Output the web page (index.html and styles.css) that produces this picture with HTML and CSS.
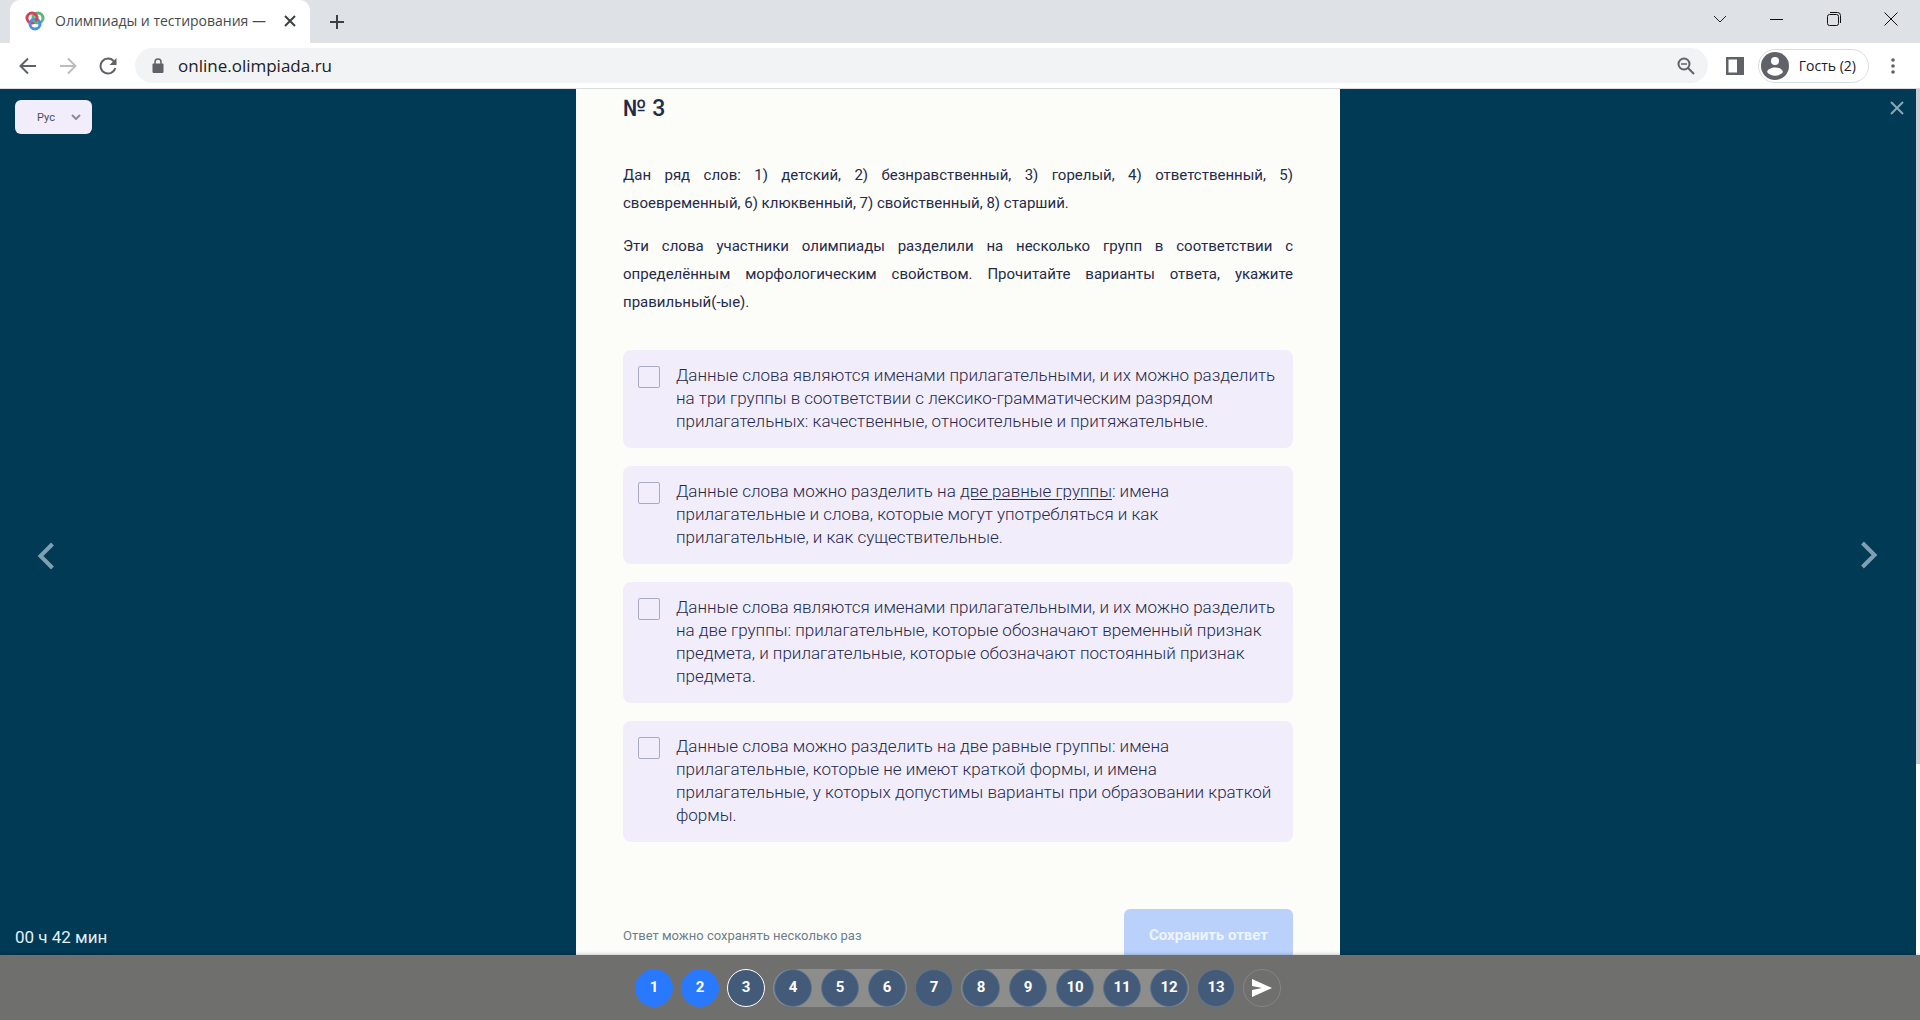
FILE: index.html
```html
<!DOCTYPE html>
<html lang="ru">
<head>
    <meta charset="UTF-8">
    <meta name="viewport" content="width=device-width, initial-scale=1.0">
    <title>Олимпиады и тестирования</title>
    <link rel="stylesheet" href="styles.css">
</head>
<body>
    <div class="browser">
        <div class="tabs">
            <div class="tab">
                <svg class="favicon" width="20" height="20" viewBox="0 0 20 20" fill="none" stroke-width="3">
                    <circle cx="13" cy="7" r="5" stroke="#58b878"/>
                    <circle cx="10" cy="13" r="5" stroke="#4a8fe8"/>
                    <circle cx="7" cy="7" r="5" stroke="#cf4456"/>
                    <path d="M8 6a5 5 0 0 0 4 6" stroke="#58b878" stroke-width="2"/>
                    <path d="M5 13a5 5 0 0 1 5-5" stroke="#4a8fe8" stroke-width="2"/>
                </svg>
                <span class="tab-title">Олимпиады и тестирования —</span>
                <button class="tab-close" aria-label="Закрыть вкладку">
                    <svg width="12" height="12" viewBox="0 0 12 12" stroke="#3c4043" stroke-width="2"><path d="M1 1l10 10M11 1L1 11"/></svg>
                </button>
            </div>
            <button class="new-tab" aria-label="Новая вкладка">
                <svg width="16" height="16" viewBox="0 0 16 16" stroke="#3c4043" stroke-width="2"><path d="M8 1v14M1 8h14"/></svg>
            </button>
            <div class="window-buttons">
                <button aria-label="Поиск вкладок"><svg width="14" height="14" viewBox="0 0 14 14" fill="none" stroke="#222"><path d="M1 4l6 6 6-6"/></svg></button>
                <button aria-label="Свернуть"><svg width="14" height="14" viewBox="0 0 14 14" stroke="#111"><path d="M0 7.5h13"/></svg></button>
                <button aria-label="Развернуть"><svg width="14" height="14" viewBox="0 0 14 14" fill="none" stroke="#111"><rect x="0.5" y="2.5" width="11" height="11" rx="2"/><path d="M3 0.500h7.500a3 3 0 0 1 3 3v7.500"/></svg></button>
                <button aria-label="Закрыть"><svg width="14" height="14" viewBox="0 0 14 14" stroke="#111"><path d="M0.500 0.500l13 13M13.500 0.500l-13 13"/></svg></button>
            </div>
        </div>
        <div class="toolbar">
            <button aria-label="Назад"><svg width="18" height="18" viewBox="0 0 18 18" fill="none" stroke="#5f6368" stroke-width="2"><path d="M17 9H2M9 1.500L1.500 9 9 16.500"/></svg></button>
            <button aria-label="Вперёд"><svg width="18" height="18" viewBox="0 0 18 18" fill="none" stroke="#babcbe" stroke-width="2"><path d="M1 9h15M9 1.500L16.500 9 9 16.500"/></svg></button>
            <button aria-label="Обновить"><svg width="18" height="18" viewBox="0 0 18 18" fill="none" stroke="#5f6368" stroke-width="2"><path d="M15 4.500A7.500 7.500 0 1 0 16.300 11"/><path d="M17.500 1v7h-7z" fill="#5f6368" stroke="none"/></svg></button>
            <div class="address">
                <svg width="12" height="16" viewBox="0 0 12 16"><rect x="0.500" y="5.500" width="11" height="9.500" rx="1" fill="#5f6368"/><path d="M3 6V4a3 3 0 0 1 6 0v2" fill="none" stroke="#5f6368" stroke-width="1.500"/></svg>
                <input class="url" type="text" value="online.olimpiada.ru" aria-label="Адрес">
                <svg width="18" height="18" viewBox="0 0 18 18" fill="none" stroke="#5f6368" stroke-width="2"><circle cx="7" cy="7" r="5.500"/><path d="M11 11l6 6"/><path d="M4 7h6" stroke-width="1.500"/></svg>
            </div>
            <button class="panel-button" aria-label="Боковая панель"><svg width="18" height="18" viewBox="0 0 18 18"><path d="M0 0h18v18H0zM2.500 2.500v13H11v-13z" fill="#5f6368" fill-rule="evenodd"/></svg></button>
            <button class="profile">
                <svg width="28" height="28" viewBox="0 0 28 28"><circle cx="14" cy="14" r="14" fill="#5f6368"/><circle cx="14" cy="9" r="4" fill="#fff"/><path d="M6 20c1.500-6 14.500-6 16 0-4 5-12 5-16 0z" fill="#fff"/></svg>
                Гость (2)
            </button>
            <button class="menu" aria-label="Меню"><svg width="4" height="16" viewBox="0 0 4 16" fill="#5f6368"><circle cx="2" cy="2" r="1.800"/><circle cx="2" cy="8" r="1.800"/><circle cx="2" cy="14" r="1.800"/></svg></button>
        </div>
    </div>

    <div class="page">
        <div class="side left">
            <select class="lang" aria-label="Язык">
                <option>Рус</option>
            </select>
            <button class="arrow" aria-label="Предыдущее задание"><svg width="18" height="28" viewBox="0 0 18 28" fill="none" stroke="#7fa0b2" stroke-width="4"><path d="M15.500 2L3.500 14l12 12"/></svg></button>
            <div class="timer">00 ч 42 мин</div>
        </div>

        <main class="task">
            <h1>№ 3</h1>
            <div class="question">
                <p>Дан ряд слов: 1) детский, 2) безнравственный, 3) горелый, 4) ответственный, 5) своевременный, 6) клюквенный, 7) свойственный, 8) старший.</p>
                <p>Эти слова участники олимпиады разделили на несколько групп в соответствии с определённым морфологическим свойством. Прочитайте варианты ответа, укажите правильный(-ые).</p>
            </div>
            <div class="answers">
                <label class="answer">
                    <input type="checkbox">
                    <span>Данные слова являются именами прилагательными, и их можно разделить<br>на три группы в соответствии с лексико-грамматическим разрядом<br>прилагательных: качественные, относительные и притяжательные.</span>
                </label>
                <label class="answer">
                    <input type="checkbox">
                    <span>Данные слова можно разделить на <u>две равные группы</u>: имена<br>прилагательные и слова, которые могут употребляться и как<br>прилагательные, и как существительные.</span>
                </label>
                <label class="answer">
                    <input type="checkbox">
                    <span>Данные слова являются именами прилагательными, и их можно разделить<br>на две группы: прилагательные, которые обозначают временный признак<br>предмета, и прилагательные, которые обозначают постоянный признак<br>предмета.</span>
                </label>
                <label class="answer">
                    <input type="checkbox">
                    <span>Данные слова можно разделить на две равные группы: имена<br>прилагательные, которые не имеют краткой формы, и имена<br>прилагательные, у которых допустимы варианты при образовании краткой<br>формы.</span>
                </label>
            </div>
            <div class="save-row">
                <span>Ответ можно сохранять несколько раз</span>
                <button class="save">Сохранить ответ</button>
            </div>
        </main>

        <div class="side right">
            <button class="close" aria-label="Закрыть"><svg width="14" height="14" viewBox="0 0 14 14" stroke="#8ba6b5" stroke-width="2"><path d="M1 1l12 12M13 1L1 13"/></svg></button>
            <button class="arrow" aria-label="Следующее задание"><svg width="18" height="28" viewBox="0 0 18 28" fill="none" stroke="#7fa0b2" stroke-width="4"><path d="M2.500 2l12 12-12 12"/></svg></button>
        </div>
        <div class="scrollbar"><div class="thumb"></div></div>
    </div>

    <nav class="numbers">
        <button class="num done">1</button>
        <button class="num done">2</button>
        <button class="num current">3</button>
        <div class="group">
            <button class="num">4</button>
            <button class="num">5</button>
            <button class="num">6</button>
        </div>
        <button class="num">7</button>
        <div class="group">
            <button class="num">8</button>
            <button class="num">9</button>
            <button class="num">10</button>
            <button class="num">11</button>
            <button class="num">12</button>
        </div>
        <button class="num">13</button>
        <button class="num send" aria-label="Завершить"><svg width="20" height="18" viewBox="0 0 20 18" fill="#fff"><path d="M0 0l20 9-20 9V11l10-2L0 7z"/></svg></button>
    </nav>
</body>
</html>
```
FILE: styles.css
```css
* {
    box-sizing: border-box;
}
body {
    margin: 0;
    height: 100vh;
    display: flex;
    flex-direction: column;
    overflow: hidden;
    font-family: Roboto, sans-serif;
    color: #262a4a;
}
button {
    padding: 0;
    border: none;
    background: none;
    font-family: inherit;
    cursor: pointer;
}
svg {
    display: block;
}

/* browser */
.browser {
    background-color: #fff;
    border-bottom: 1px solid #dadce0;
    font-family: "Open Sans", sans-serif;
}
.tabs {
    display: flex;
    height: 43px;
    background-color: #dee1e6;
}
.tab {
    display: flex;
    align-items: center;
    width: 300px;
    margin-left: 10px;
    padding: 0 14px 2px 15px;
    border-radius: 10px 10px 0 0;
    background-color: #fff;
}
.tab-title {
    flex: 1;
    margin-left: 10px;
    font-size: 14px;
    color: #45494d;
    white-space: nowrap;
}
.new-tab {
    margin-left: 19px;
}
.window-buttons {
    display: flex;
    align-items: center;
    gap: 43px;
    margin-left: auto;
    padding: 0 22px 6px 0;
}
.toolbar {
    display: flex;
    align-items: center;
    height: 45px;
    padding: 0 25px 0 19px;
    gap: 22px;
}
.address {
    flex: 1;
    display: flex;
    align-items: center;
    height: 35px;
    margin-left: -4px;
    padding: 0 13px 0 17px;
    border-radius: 18px;
    background-color: #f1f3f4;
}
.url {
    flex: 1;
    margin-left: 14px;
    padding: 0;
    border: none;
    background: none;
    font-family: "Open Sans", sans-serif;
    font-size: 17px;
    color: #202124;
}
.panel-button {
    margin: 0 -8px 0 -4px;
}
.profile {
    display: flex;
    align-items: center;
    gap: 10px;
    height: 34px;
    padding: 0 12px 0 2px;
    border: 1px solid #dadce0;
    border-radius: 17px;
    font-size: 14px;
    color: #202124;
}

/* page */
.page {
    flex: 1;
    min-height: 0;
    display: grid;
    grid-template-columns: 1fr 764px 1fr 4px;
    grid-template-rows: 100%;
    background-color: #003a54;
}
.side {
    display: flex;
    flex-direction: column;
    justify-content: space-between;
    align-items: flex-start;
}
.left {
    padding: 11px 15px 7px;
}
.right {
    align-items: flex-end;
    justify-content: flex-start;
    padding: 12px 12px;
}
.lang {
    width: 77px;
    height: 34px;
    padding: 0 22px;
    border: none;
    border-radius: 6px;
    appearance: none;
    background: url("data:image/svg+xml,%3Csvg xmlns='http://www.w3.org/2000/svg' width='10' height='6' fill='none' stroke='%238a8c98' stroke-width='2'%3E%3Cpath d='M1 1l4 4 4-4'/%3E%3C/svg%3E") no-repeat right 11px center #f2edfb;
    font-family: Roboto, sans-serif;
    font-size: 11px;
    color: #4a4c60;
}
.arrow {
    margin: 52px 22px 0;
}
.right .arrow {
    margin: 426px 26px 0;
}
.timer {
    font-size: 17px;
    line-height: 22px;
    color: #e6f0f4;
}
.task {
    padding: 0 47px;
    background-color: #fcfdf8;
}
h1 {
    margin: 6px 0 38px;
    font-size: 23px;
    line-height: 28px;
    font-weight: 500;
}
.question p {
    margin: 0 0 15px;
    font-size: 15px;
    line-height: 28px;
    text-align: justify;
}
.answers {
    display: flex;
    flex-direction: column;
    gap: 18px;
    margin-top: 34px;
}
.answer {
    display: flex;
    gap: 16px;
    padding: 14px 15px 15px;
    border-radius: 8px;
    background-color: #f2edfb;
    font-size: 17px;
    line-height: 23px;
    font-weight: 300;
    white-space: nowrap;
}
.answer input {
    appearance: none;
    flex: none;
    width: 22px;
    height: 22px;
    margin: 2px 0 0;
    border: 1px solid #a9abc4;
    border-radius: 2px;
}
u {
    text-underline-offset: 2px;
}
.save-row {
    display: flex;
    justify-content: space-between;
    align-items: center;
    margin-top: 67px;
    font-size: 13px;
    color: #6b7d8e;
}
.save {
    width: 169px;
    height: 52px;
    border-radius: 6px;
    background-color: #bad2fb;
    font-size: 15px;
    font-weight: 700;
    color: #eef4fe;
}
.scrollbar {
    background-color: #fff;
}
.thumb {
    height: 78%;
    background-color: #cdcfd2;
}

/* task numbers */
.numbers {
    position: relative;
    display: flex;
    justify-content: center;
    align-items: center;
    gap: 8px;
    height: 65px;
    padding-right: 4px;
    background-color: #6f706d;
    box-shadow: 0 0 4px rgba(0, 0, 0, 0.3);
}
.group {
    display: flex;
    gap: 9px;
    padding: 0 1px;
    border-radius: 19px;
    background-color: #8d8e8b;
}
.num {
    display: flex;
    justify-content: center;
    align-items: center;
    width: 38px;
    height: 38px;
    padding-bottom: 2px;
    border: 1px solid #5c7591;
    border-radius: 50%;
    background-color: #445a79;
    font-size: 15px;
    font-weight: 700;
    color: #fff;
}
.done {
    border-color: #2979ff;
    background-color: #2979ff;
}
.current {
    border-color: #fff;
}
.send {
    padding: 0;
    border-color: #858683;
    background: none;
}
```
